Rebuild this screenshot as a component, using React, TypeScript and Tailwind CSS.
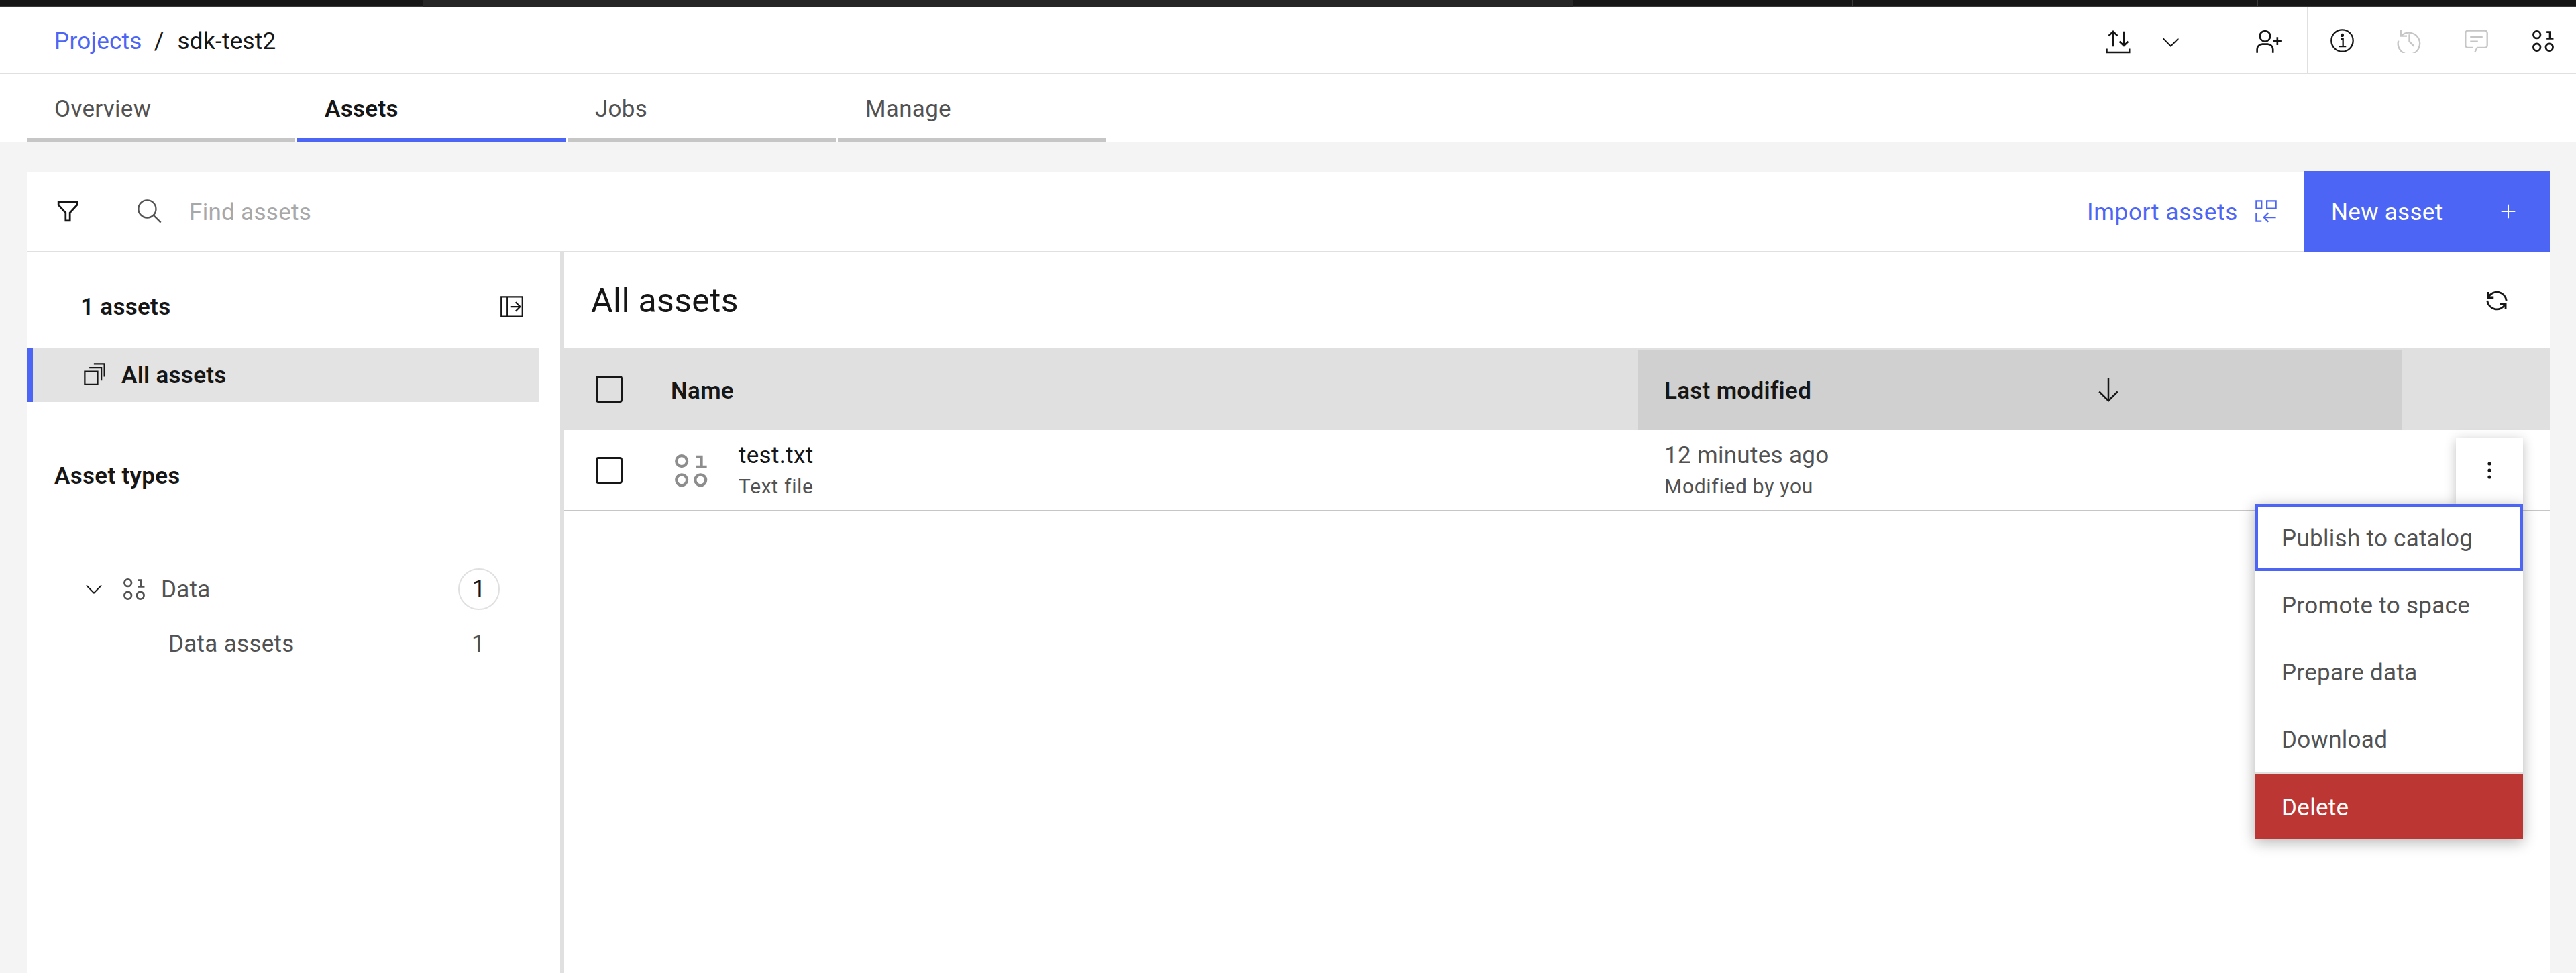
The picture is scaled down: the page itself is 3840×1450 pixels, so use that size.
import type { ReactNode } from "react";

const font = "font-['Roboto',_'Liberation_Sans',_sans-serif]";

function Icon({ size = 35, className = "", children }: { size?: number; className?: string; children: ReactNode }) {
  return (
    <svg viewBox="0 0 32 32" width={size} height={size} fill="none" stroke="currentColor" strokeWidth={2} className={`shrink-0 ${className}`}>
      {children}
    </svg>
  );
}

function DataIcon({ size = 35, className = "" }: { size?: number; className?: string }) {
  return (
    <Icon size={size} className={className}>
      <circle cx="6.5" cy="6.5" r="5.1" strokeWidth={2.7} />
      <circle cx="6.5" cy="24.5" r="5.1" strokeWidth={2.7} />
      <circle cx="24.5" cy="24.5" r="5.1" strokeWidth={2.7} />
      <path d="M20.5 2.5h4.8V12M20.5 12h10" strokeWidth={2.7} />
    </Icon>
  );
}

function Checkbox() {
  return <div className="w-[40px] h-[40px] rounded-[4px] border-[3px] border-[#161616]" />;
}

function Tab({ label, active = false }: { label: string; active?: boolean }) {
  return (
    <div className={`w-[400px] h-[100px] pl-[41px] pt-[29px] border-b-[5px] text-[35px] leading-[46px] ${active ? "border-[#4c65f5] font-semibold text-[#161616]" : "border-[#c6c6c6] text-[#525252]"}`}>
      {label}
    </div>
  );
}

const menuItems = ["Promote to space", "Prepare data", "Download"];

export default function App() {
  return (
    <div className={`${font} relative w-[3840px] h-[1450px] overflow-hidden bg-[#f4f4f4] tracking-[0.3px]`}>
      {/* top strip */}
      <div className="flex h-[11px] bg-[#161616] border-b-[2px] border-[#393939]">
        <div className="w-[630px]" />
        <div className="w-[1715px] bg-[#262626] h-[10px]" />
        <div className="w-[417px] border-r border-[#393939]" />
        <div className="w-[604px] border-r border-[#393939]" />
        <div className="w-[236px] border-r border-[#393939]" />
      </div>

      {/* breadcrumb header */}
      <div className="flex items-center justify-between h-[100px] bg-white border-b-[2px] border-[#e0e0e0]">
        <div className="flex items-center pl-[81px] pt-[3px] text-[35px] leading-[46px]">
          <span className="text-[#4c65f5]">Projects</span>
          <span className="ml-[18px] text-[#161616]">/</span>
          <span className="ml-[20px] text-[#161616]">sdk-test2</span>
        </div>
        <div className="flex items-center h-full">
          <div className="flex items-center text-[#161616] pt-[6px]">
            <Icon size={40}>
              <path d="M2 23.5V28h27v-4.5M9.6 21V3M4.4 8.2L9.6 3l5.2 5.2M22.4 3v17M17.2 15l5.2 5 5.2-5" />
            </Icon>
            <Icon size={30} className="ml-[43px]">
              <path d="M4 10l12 12 12-12" strokeWidth={2.2} />
            </Icon>
            <Icon size={42} className="ml-[111px]">
              <circle cx="11" cy="9" r="6" />
              <path d="M2 28v-4a6 6 0 0 1 6-6h6a6 6 0 0 1 6 6v4M25 10v9M20.4 14.5h9.2" />
            </Icon>
          </div>
          <div className="flex items-center h-full ml-[35px] pl-[32px] pr-[32px] border-l-[2px] border-[#e0e0e0]">
            <Icon size={37} className="text-[#161616]">
              <circle cx="16" cy="16" r="14" />
              <path d="M17 23V14h-3M12 23.5h9" />
              <circle cx="16" cy="9" r="1.2" fill="currentColor" />
            </Icon>
            <Icon size={37} className="ml-[63px] text-[#c6c6c6]">
              <path d="M5 2v8h8M5.4 10A14 14 0 1 1 2 16" />
              <path d="M16 8v9l6 6" />
            </Icon>
            <Icon size={37} className="ml-[63px] text-[#c6c6c6]">
              <path d="M17 25l-3 6M17 25h10a3 3 0 0 0 3-3V6a3 3 0 0 0-3-3H5a3 3 0 0 0-3 3v16a3 3 0 0 0 3 3h7M8 11h16M8 17h10" />
            </Icon>
            <DataIcon size={33} className="ml-[65px] mt-[2px] text-[#161616]" />
          </div>
        </div>
      </div>

      {/* tabs */}
      <div className="flex gap-[3px] pl-[40px] bg-white">
        <Tab label="Overview" />
        <Tab label="Assets" active />
        <Tab label="Jobs" />
        <Tab label="Manage" />
      </div>

      <div className="ml-[40px] mr-[39px] mt-[45px] bg-white">
        {/* toolbar */}
        <div className="flex items-center h-[120px] border-b-[2px] border-[#e0e0e0]">
          <Icon size={34} className="ml-[44px] text-[#161616]">
            <path d="M3 3h26v4L19 18v11h-6V18L3 7z" strokeWidth={2.6} />
          </Icon>
          <div className="ml-[44px] w-px h-[60px] bg-[#e0e0e0]" />
          <Icon size={38} className="ml-[41px] text-[#525252]">
            <circle cx="13" cy="13" r="11" />
            <path d="M21 21l9 9" />
          </Icon>
          <span className="ml-[40px] pt-[3px] text-[35px] leading-[46px] text-[#a8a8a8]">Find assets</span>
          <span className="ml-auto pt-[3px] text-[35px] leading-[46px] tracking-[0.7px] text-[#4c65f5]">Import assets</span>
          <Icon size={36} className="ml-[24px] mr-[39px] text-[#4c65f5]">
            <path d="M3 2h7v10H3zM17 2h12v10H17zM3 18v11h7M29 24H14M19 18l-6 6 6 6" />
          </Icon>
          <div className="flex items-center justify-between h-[120px] w-[366px] pl-[40px] pr-[51px] bg-[#4c65f5] text-white text-[35px] leading-[46px]">
            <span className="pt-[3px]">New asset</span>
            <Icon size={22}>
              <path d="M16 1v30M1 16h30" strokeWidth={3} />
            </Icon>
          </div>
        </div>

        <div className="relative flex h-[1074px]">
          {/* left filters */}
          <div className="w-[795px] shrink-0">
            <div className="flex items-start justify-between h-[143px] pl-[80px] pr-[54px] pt-[59px] font-semibold text-[35px] leading-[46px] text-[#161616]">
              1 assets
              <Icon size={36} className="mt-[4px]">
                <path d="M2 3h28v26H2zM10 3v26M14 16h12M21 10l6 6-6 6" />
              </Icon>
            </div>
            <div className="flex items-center h-[80px] mr-[31px] pl-[74px] border-l-[9px] border-[#4c65f5] bg-[#e3e3e3]">
              <Icon size={36} className="text-[#161616] mb-[4px]">
                <path d="M3 13h17v17H3zM9 8h16v17M15 3h14v17" strokeWidth={2} />
              </Icon>
              <span className="ml-[22px] pt-[1px] font-semibold text-[35px] leading-[46px] text-[#161616]">All assets</span>
            </div>
            <div className="pl-[41px] pt-[88px] font-semibold text-[35px] leading-[46px] text-[#161616]">Asset types</div>
            <div className="flex items-center h-[60px] mt-[115px] pl-[85px] text-[35px] leading-[46px] text-[#525252]">
              <Icon size={30} className="text-[#161616]">
                <path d="M4 10l12 12 12-12" strokeWidth={2.2} />
              </Icon>
              <DataIcon size={33} className="ml-[29px]" />
              <span className="ml-[23px] pt-[1px]">Data</span>
              <span className="ml-auto mr-[90px] flex items-center justify-center w-[62px] h-[62px] rounded-full border-2 border-[#e0e0e0] text-[#161616]">1</span>
            </div>
            <div className="flex justify-between mt-[29px] pl-[211px] pr-[112px] text-[35px] leading-[46px] text-[#525252]">
              <span>Data assets</span>
              <span>1</span>
            </div>
          </div>

          <div className="w-[5px] shrink-0 bg-[#e0e0e0]" />

          {/* asset table */}
          <div className="flex-1">
            <div className="flex items-center justify-between h-[143px] pl-[41px] pr-[60px]">
              <h1 className="text-[50px] leading-[60px] text-[#161616]">All assets</h1>
              <Icon size={38} className="text-[#161616]">
                <path d="M12 12H5V5" strokeWidth={3} />
                <path d="M5.5 11.5A12 12 0 0 1 28 16M20 20h7v7" strokeWidth={2.4} />
                <path d="M26.5 20.5A12 12 0 0 1 4 16" strokeWidth={2.4} />
              </Icon>
            </div>
            <div className="grid grid-cols-[160px_1441px_1140px_1fr] h-[122px] bg-[#e0e0e0] text-[35px] leading-[46px] font-semibold text-[#161616]">
              <div className="flex items-center pl-[48px]">
                <Checkbox />
              </div>
              <div className="flex items-center pt-[6px]">Name</div>
              <div className="flex items-center mt-[2px] pl-[40px] pt-[4px] bg-[#d0d0d0]">
                Last modified
                <Icon size={40} className="ml-[423px] mb-[4px]">
                  <path d="M16 2v27M5 18l11 11 11-11" strokeWidth={2} />
                </Icon>
              </div>
              <div />
            </div>
            <div className="grid grid-cols-[160px_1441px_1fr] h-[121px] border-b-[2px] border-[#c6c6c6]">
              <div className="flex items-center pl-[48px]">
                <Checkbox />
              </div>
              <div className="flex items-center text-[#8d8d8d]">
                <DataIcon size={50} className="ml-[6px] mt-[3px]" />
                <div className="ml-[45px]">
                  <div className="text-[35px] leading-[44px] text-[#161616]">test.txt</div>
                  <div className="pt-[4px] text-[30px] leading-[40px] tracking-[0.7px] text-[#525252]">Text file</div>
                </div>
              </div>
              <div className="pl-[40px] pt-[16px]">
                <div className="text-[35px] leading-[44px] text-[#525252]">12 minutes ago</div>
                <div className="pt-[4px] text-[30px] leading-[40px] tracking-[0.7px] text-[#525252]">Modified by you</div>
              </div>
            </div>
          </div>

          {/* overflow button and its menu */}
          <div className="absolute right-0 top-[276px] mr-[40px] flex items-center justify-center w-[100px] h-[99px] bg-white shadow-[0_4px_16px_rgba(0,0,0,0.25)]">
            <svg width="10" height="26" viewBox="0 0 10 26" className="text-[#161616] mb-[2px]" fill="currentColor">
              <circle cx="5" cy="3" r="2.6" />
              <circle cx="5" cy="13" r="2.6" />
              <circle cx="5" cy="23" r="2.6" />
            </svg>
          </div>
          <div className="absolute right-0 top-[375px] mr-[40px] w-[400px] bg-white text-[35px] leading-[46px] text-[#525252] shadow-[0_4px_20px_rgba(0,0,0,0.3)]">
            <div className="flex items-center h-[100px] pl-[35px] pt-[3px] border-[5px] border-[#4c65f5]">Publish to catalog</div>
            {menuItems.map((item) => (
              <div key={item} className="flex items-center h-[100px] pl-[40px] pt-[3px]">{item}</div>
            ))}
            <div className="flex items-center h-[100px] pl-[40px] pt-[3px] border-t-[2px] border-[#e0e0e0] bg-[#bc3633] text-white">Delete</div>
          </div>
        </div>
      </div>
    </div>
  );
}
